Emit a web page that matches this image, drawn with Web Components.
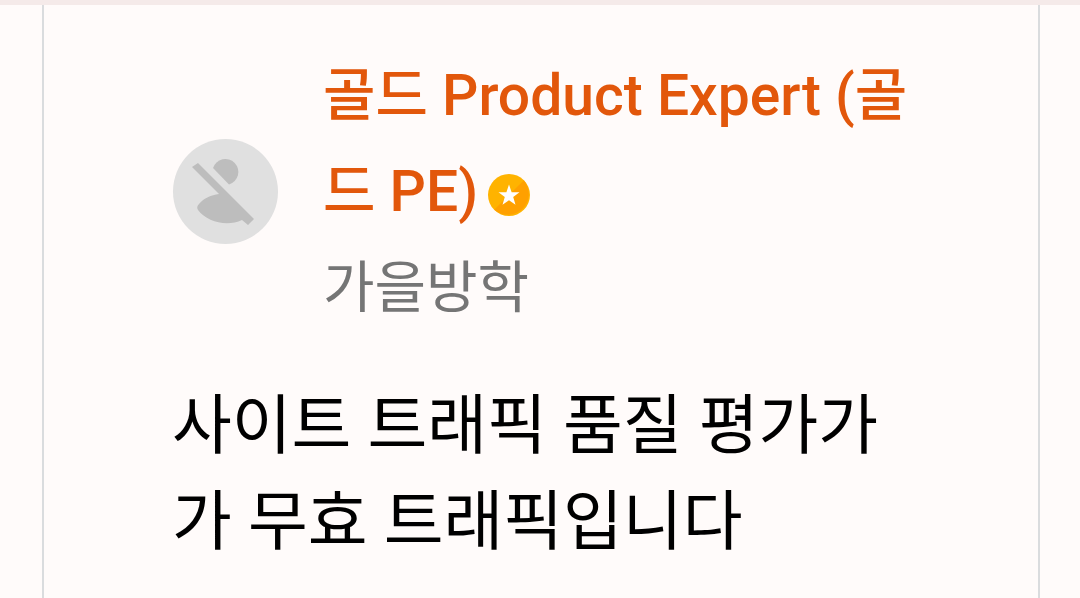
<!DOCTYPE html>
<html lang="ko">
<head>
<meta charset="utf-8">
<meta name="viewport" content="width=device-width, initial-scale=1">
<title>골드 Product Expert</title>
<style>
  html, body { margin: 0; min-height: 100%; background: #fffbfa; }
  body { display: flex; min-height: 100vh; font-family: Roboto, "Noto Sans CJK KR", sans-serif; }
</style>
</head>
<body>
<post-page>
  <post-card>
    <post-author slot="author">
      <user-avatar slot="avatar"></user-avatar>
      <span slot="role">골드 Product Expert (골드 PE)</span>
      <expert-badge slot="badge"></expert-badge>
      <span slot="name">가을방학</span>
    </post-author>
    <span slot="title">사이트 트래픽 품질 평가가가 무효 트래픽입니다</span>
  </post-card>
</post-page>
<script>
function define(name, html) {
  customElements.define(name, class extends HTMLElement {
    constructor() {
      super();
      this.attachShadow({ mode: "open" }).innerHTML = html;
    }
  });
}

define("post-page", `
  <style>
    :host { display: flex; flex: 1; box-sizing: border-box; border-top: 5px solid #f5eae9; padding: 0 40px 0 42px; }
  </style>
  <slot></slot>`);

define("post-card", `
  <style>
    :host { display: block; flex: 1; min-width: 0; padding: 43px 128px 0; border: solid #dadcde; border-width: 0 2px; }
    h1 { margin: 42px 0 0; font-size: 65px; line-height: 96px; font-weight: 400; color: #000; word-break: break-all; }
  </style>
  <article>
    <slot name="author"></slot>
    <h1><slot name="title"></slot></h1>
  </article>`);

define("post-author", `
  <style>
    :host { display: flex; align-items: center; gap: 45px; line-height: 96px; }
    .text { flex: 1; min-width: 0; word-break: break-all; }
    .role { color: #e2570b; font-size: 57px; font-weight: 500; }
    .name { color: #757575; font-size: 56px; }
  </style>
  <slot name="avatar"></slot>
  <div class="text">
    <div class="role"><slot name="role"></slot><slot name="badge"></slot></div>
    <div class="name"><slot name="name"></slot></div>
  </div>`);

define("user-avatar", `
  <style>
    :host { display: block; flex: none; width: 106px; height: 106px; }
    svg { display: block; width: 100%; height: 100%; }
  </style>
  <svg viewBox="0 0 106 106" role="img" aria-label="프로필 사진">
    <circle cx="53.5" cy="52.5" r="52.5" fill="#e0e0e0"/>
    <g fill="#bdbdbd">
      <path d="M41 29A13 13 0 1 1 57 45.5Z"/>
      <path d="M26 24L82 80L76 86L70 81C55 88 35 83 26 71Q24 68 27 65C32 59 39 56 47 55L20 28Z"/>
    </g>
  </svg>`);

define("expert-badge", `
  <style>
    :host { display: inline-block; width: 42px; height: 42px; margin-left: 10px; vertical-align: -5px; line-height: 0; }
    svg { display: block; width: 100%; height: 100%; }
  </style>
  <svg viewBox="0 0 42 42" role="img" aria-label="골드">
    <circle cx="21" cy="21" r="21" fill="#ffb300"/>
    <path d="M35.8 6.2A21 21 0 0 1 6.2 35.8Z" fill="#ffa000"/>
    <path d="M21 10.5L23.6 18.2L31.5 18.2L25.2 23L27.5 30.8L21 26.2L14.5 30.8L16.8 23L10.5 18.2L18.4 18.2Z" fill="#fff"/>
  </svg>`);
</script>
</body>
</html>
